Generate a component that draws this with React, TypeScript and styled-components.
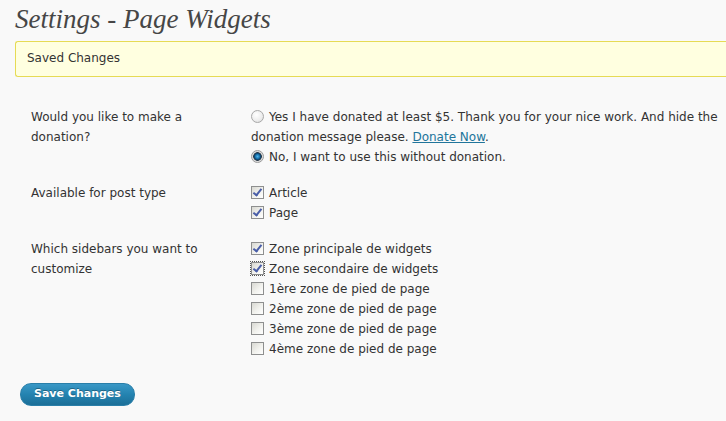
import React from "react";
import styled, { createGlobalStyle } from "styled-components";

const GlobalStyle = createGlobalStyle`
  html, body {
    margin: 0;
    padding: 0;
    background: #f9f9f9;
    overflow: hidden;
  }
  body {
    font-family: "DejaVu Sans", Verdana, sans-serif;
    font-size: 12px;
    color: #333;
  }
`;

type Row = {
  label: string;
  kind: "radio" | "checkbox";
  options: { text: React.ReactNode; checked: boolean; focused?: boolean }[];
};

const getRows = (): Row[] => [
  {
    label: "Would you like to make a donation?",
    kind: "radio",
    options: [
      {
        text: (
          <>
            Yes I have donated at least $5. Thank you for your nice work. And hide the donation
            message please. <StyledLink href="#">Donate Now</StyledLink>.
          </>
        ),
        checked: false,
      },
      { text: "No, I want to use this without donation.", checked: true },
    ],
  },
  {
    label: "Available for post type",
    kind: "checkbox",
    options: [
      { text: "Article", checked: true },
      { text: "Page", checked: true },
    ],
  },
  {
    label: "Which sidebars you want to customize",
    kind: "checkbox",
    options: [
      { text: "Zone principale de widgets", checked: true },
      { text: "Zone secondaire de widgets", checked: true, focused: true },
      { text: "1ère zone de pied de page", checked: false },
      { text: "2ème zone de pied de page", checked: false },
      { text: "3ème zone de pied de page", checked: false },
      { text: "4ème zone de pied de page", checked: false },
    ],
  },
];

const App = () => {
  const rows = getRows();
  return (
    <>
      <GlobalStyle />
      <StyledWrap>
        <StyledTitle>Settings - Page Widgets</StyledTitle>
        <StyledNotice>Saved Changes</StyledNotice>
        <StyledForm>
          {rows.map((row, i) => (
            <StyledRow key={i}>
              <StyledLabel>{row.label}</StyledLabel>
              <StyledField>
                {row.options.map((opt, j) => (
                  <StyledOption key={j}>
                    {row.kind === "radio" ? (
                      <StyledRadio type="radio" name={`r${i}`} defaultChecked={opt.checked} />
                    ) : (
                      <StyledCheck type="checkbox" $focused={opt.focused} defaultChecked={opt.checked} />
                    )}
                    {opt.text}
                  </StyledOption>
                ))}
              </StyledField>
            </StyledRow>
          ))}
        </StyledForm>
        <StyledButton type="button">Save Changes</StyledButton>
      </StyledWrap>
    </>
  );
};

export default App;

const StyledWrap = styled.div`
  padding: 4px 0 0 15px;
`;

const StyledTitle = styled.h2`
  margin: 0;
  font-family: "Liberation Serif", Georgia, serif;
  font-style: italic;
  font-weight: normal;
  font-size: 27px;
  line-height: 30px;
  color: #464646;
`;

const StyledNotice = styled.div`
  margin-top: 7px;
  padding: 9px 11px 10px;
  line-height: 15px;
  background: #ffffe0;
  border: 1px solid #e6db55;
  border-right: none;
  border-radius: 3px 0 0 3px;
`;

const StyledForm = styled.div`
  margin-top: 22px;
`;

const StyledRow = styled.div`
  display: grid;
  grid-template-columns: 236px 1fr;
  padding: 8px 0;
  line-height: 20px;
`;

const StyledLabel = styled.div`
  padding: 0 20px 0 16px;
`;

const StyledField = styled.div`
  min-width: 0;
`;

const StyledOption = styled.label`
  display: block;
`;

const StyledLink = styled.a`
  color: #21759b;
  text-decoration: underline;
`;

const StyledRadio = styled.input`
  appearance: none;
  width: 13px;
  height: 13px;
  margin: 0 5px 0 0;
  vertical-align: -2px;
  border: 1px solid #a8a8a8;
  border-radius: 50%;
  background: radial-gradient(circle at 40% 35%, #ffffff 0%, #ececec 60%, #d4d4d4 100%);
  box-sizing: border-box;

  &:checked {
    border-color: #9a9a9a;
    background: radial-gradient(
      circle at 50% 50%,
      #4fb4e8 0px,
      #1a78b4 2px,
      #0d4a78 3px,
      #2b3a48 4px,
      #dadada 4.6px,
      #f0f0f0 100%
    );
  }
`;

const StyledCheck = styled.input<{ $focused?: boolean }>`
  appearance: none;
  width: 13px;
  height: 13px;
  margin: 0 5px 0 0;
  vertical-align: -2px;
  border: 1px solid #8e8f8f;
  background: linear-gradient(135deg, #d8d8d2 0%, #f2f2ee 55%, #ffffff 100%);
  box-sizing: border-box;
  position: relative;
  outline: ${(p) => (p.$focused ? "1px dotted #555" : "none")};
  outline-offset: 0;

  &:checked::after {
    content: "";
    position: absolute;
    left: 3px;
    top: 0px;
    width: 3px;
    height: 7px;
    border-right: 2px solid #4a5ea8;
    border-bottom: 2px solid #4a5ea8;
    transform: rotate(38deg);
  }
`;

const StyledButton = styled.button`
  margin: 16px 0 0 5px;
  padding: 3px 13px 4px;
  font-family: "DejaVu Sans", Verdana, sans-serif;
  font-size: 11px;
  font-weight: bold;
  line-height: 14px;
  color: #fff;
  text-shadow: 0 -1px 0 rgba(0, 0, 0, 0.3);
  background: linear-gradient(to bottom, #3a98c6 0%, #2483b0 50%, #1c6f98 100%);
  border: 1px solid #2a7fa9;
  border-radius: 11px;
  cursor: pointer;
`;
